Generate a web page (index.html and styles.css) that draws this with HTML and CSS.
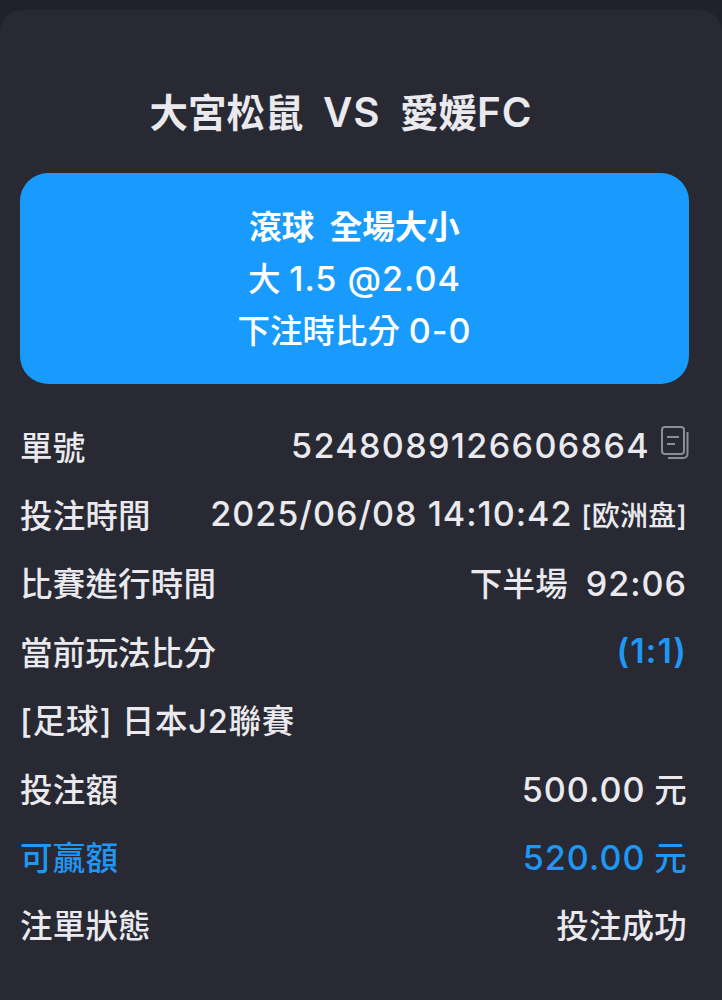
FILE: index.html
```html
<!DOCTYPE html>
<html lang="zh-Hant">
<head>
  <meta charset="UTF-8">
  <title>注單詳情</title>
  <link rel="stylesheet" href="styles.css">
</head>
<body>

<main class="sheet">
  <h1 class="match">大宮松鼠&nbsp; <span class="num">VS</span> &nbsp;愛媛<span class="num">FC</span></h1>

  <div class="bet-box">
    <p class="bet-type">滾球&nbsp; 全場大小</p>
    <p>大 <span class="num">1.5 @2.04</span></p>
    <p>下注時比分 <span class="num">0-0</span></p>
  </div>

  <div class="rows">
    <div class="row">
      <span>單號</span>
      <span class="order-no"><span class="num">5248089126606864</span>
        <svg class="copy-icon" viewBox="0 0 28 33" width="28" height="33" fill="none" stroke="#8d8e95" stroke-width="2">
          <rect x="1" y="1" width="22" height="27" rx="3"/>
          <path d="M26.5 6v22a4 4 0 0 1-4 4H7"/>
          <path d="M6 11h12M6 18h8"/>
        </svg>
      </span>
    </div>
    <div class="row">
      <span>投注時間</span>
      <span><span class="num">2025/06/08 14:10:42</span> <small>[欧洲盘]</small></span>
    </div>
    <div class="row">
      <span>比賽進行時間</span>
      <span>下半場&nbsp; <span class="num">92:06</span></span>
    </div>
    <div class="row">
      <span>當前玩法比分</span>
      <span class="blue strong num">(1:1)</span>
    </div>
    <div class="row">
      <span class="league">[足球] 日本J2聯賽</span>
    </div>
    <div class="row">
      <span>投注額</span>
      <span><span class="num">500.00</span> 元</span>
    </div>
    <div class="row blue">
      <span>可贏額</span>
      <span><span class="num">520.00</span> 元</span>
    </div>
    <div class="row">
      <span>注單狀態</span>
      <span>投注成功</span>
    </div>
  </div>
</main>

</body>
</html>
```

FILE: styles.css
```css
* {
  box-sizing: border-box;
  margin: 0;
  padding: 0;
}
body {
  background: #20212a;
  color: #e9e9ee;
  font-family: "Inter", "Noto Sans CJK TC", sans-serif;
  height: 1000px;
  overflow: hidden;
  padding-top: 10px;
}
.sheet {
  background: #282933;
  border-radius: 22px 22px 0 0;
  height: 990px;
  padding: 0 33px 0 20px;
  overflow: hidden;
}
.match {
  font-size: 38.5px;
  font-weight: 600;
  line-height: 50px;
  text-align: center;
  padding-right: 27px;
  margin-top: 78px;
  margin-bottom: 35px;
  color: #e9e9ee;
}
.bet-box {
  background: #199bfd;
  border-radius: 28px;
  height: 211px;
  padding-top: 29px;
  text-align: center;
  color: #fff;
  font-size: 32.5px;
  font-weight: 500;
  line-height: 51px;
}
.bet-type {
  font-weight: 700;
}
.rows {
  margin-top: 27px;
  padding-right: 2px;
}
.row {
  display: flex;
  justify-content: space-between;
  align-items: center;
  height: 68.4px;
  font-size: 32.5px;
  font-weight: 500;
  letter-spacing: 0.2px;
  white-space: nowrap;
}
.num {
  font-size: 1.05em;
  letter-spacing: 1px;
}
.league {
  letter-spacing: 0.8px;
}
.order-no {
  display: flex;
  align-items: center;
  gap: 11px;
  margin-right: -2px;
}
.order-no .num {
  letter-spacing: 1.35px;
}
.copy-icon {
  margin-top: -6px;
}
small {
  font-size: 28px;
}
.blue {
  color: #1f97f5;
}
.strong {
  font-weight: 600;
}
```
